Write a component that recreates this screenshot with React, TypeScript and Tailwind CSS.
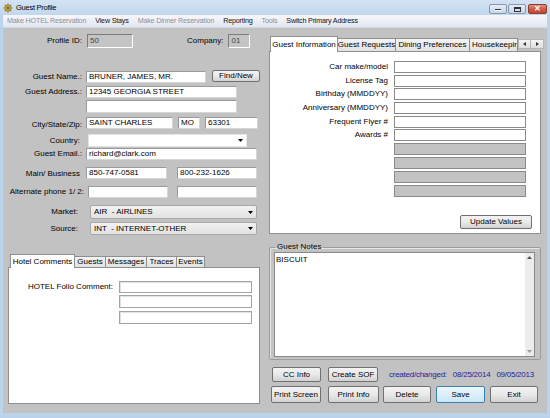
import React from "react";

const FONT = "font-['Liberation_Sans',Arial,sans-serif]";

function Field({ className = "", children }: { className?: string; children?: React.ReactNode }) {
  return (
    <div
      className={`flex items-center bg-white border border-t-[#9a9a9a] border-l-[#9a9a9a] border-r-[#d6d6d6] border-b-[#d6d6d6] px-[2px] text-[8px] whitespace-nowrap overflow-hidden shrink-0 ${className}`}
    >
      {children}
    </div>
  );
}

function Btn({
  className = "",
  children,
  primary = false,
}: {
  className?: string;
  children: React.ReactNode;
  primary?: boolean;
}) {
  return (
    <div
      className={`flex items-center justify-center shrink-0 rounded-[2px] border text-[8px] text-black whitespace-nowrap ${
        primary
          ? "border-[#3c7fb1] bg-linear-to-b from-[#eef7fd] to-[#c9e6f8]"
          : "border-[#707070] bg-linear-to-b from-[#f3f3f3] via-[#e9e9e9] to-[#d2d2d2]"
      } ${className}`}
    >
      {children}
    </div>
  );
}

function DownArrow() {
  return (
    <svg width="5" height="3" viewBox="0 0 5 3" className="shrink-0">
      <path d="M0 0h5L2.5 3z" fill="#000" />
    </svg>
  );
}

function Label({ className = "", children }: { className?: string; children: React.ReactNode }) {
  return <div className={`shrink-0 text-right text-[8px] whitespace-nowrap ${className}`}>{children}</div>;
}

function TitleBar() {
  return (
    <div className="h-[15px] flex items-start bg-linear-to-b from-[#d3e3f5] to-[#c2d6ed]">
      <svg width="10" height="10" viewBox="0 0 10 10" className="ml-[3px] mt-[3px]">
        <circle cx="5" cy="5" r="3.6" fill="#d9a81e" />
        <path d="M5 0.5v2M5 7.5v2M0.5 5h2M7.5 5h2M1.8 1.8l1.4 1.4M6.8 6.8l1.4 1.4M8.2 1.8L6.8 3.2M3.2 6.8L1.8 8.2" stroke="#6b6a3a" strokeWidth="1.1" />
        <circle cx="5" cy="5" r="1.4" fill="#5a6e8c" />
      </svg>
      <div className="ml-[3px] mt-[3px] text-[7.5px] tracking-[-0.25px] leading-[9px] text-black">Guest Profile</div>
      <div className="ml-auto mr-[3px] mt-[4px] flex gap-[1px]">
        <div className="w-[18px] h-[10px] rounded-[2px] border border-[#8798b3] bg-linear-to-b from-[#e6eef8] to-[#c6d5e9] flex items-end justify-center pb-[2px]">
          <div className="w-[6px] h-[2px] bg-[#333] border-b border-white" />
        </div>
        <div className="w-[18px] h-[10px] rounded-[2px] border border-[#8798b3] bg-linear-to-b from-[#e6eef8] to-[#c6d5e9] flex items-center justify-center">
          <div className="w-[7px] h-[5px] border border-[#333] border-t-2" />
        </div>
        <div className="ml-[1px] w-[19px] h-[10px] rounded-[2px] border border-[#8b3b2e] bg-linear-to-b from-[#e5907f] via-[#cf5a44] to-[#c04a34] flex items-center justify-center text-white text-[8px] leading-[8px] font-bold">
          ✕
        </div>
      </div>
    </div>
  );
}

function MenuBar() {
  const items = [
    { t: "Make HOTEL Reservation", on: false },
    { t: "View Stays", on: true },
    { t: "Make Dinner Reservation", on: false },
    { t: "Reporting", on: true },
    { t: "Tools", on: false },
    { t: "Switch Primary Address", on: true },
  ];
  return (
    <div className="h-[13px] flex items-center gap-[9px] pl-[4px] bg-linear-to-b from-[#f6f7fb] to-[#e3e7f1] border-b border-[#cdd8ea]">
      {items.map((i) => (
        <span
          key={i.t}
          className={`text-[7.2px] tracking-[-0.2px] whitespace-nowrap ${i.on ? "text-[#111]" : "text-[#8e8f99]"}`}
        >
          {i.t}
        </span>
      ))}
    </div>
  );
}

function LeftColumn() {
  const tabs = [
    { t: "Guests", w: "w-[31px]" },
    { t: "Messages", w: "w-[41px]" },
    { t: "Traces", w: "w-[30px]" },
    { t: "Events", w: "w-[28px]" },
  ];
  return (
    <div className="w-[266px] shrink-0 flex flex-col">
      {/* Profile / Company */}
      <div className="mt-[6px] h-[14px] flex items-center">
        <Label className="w-[79px]">Profile ID:</Label>
        <div className="ml-[5px] w-[46px] h-[14px] flex items-center px-[2px] text-[8px] text-[#444] border border-t-[#7c7c7c] border-l-[#7c7c7c] border-r-white border-b-white bg-[#c4c4c4]">
          50
        </div>
        <Label className="ml-[54px]">Company:</Label>
        <div className="ml-[5px] w-[22px] h-[14px] flex items-center px-[2px] text-[8px] text-[#444] border border-t-[#7c7c7c] border-l-[#7c7c7c] border-r-white border-b-white bg-[#c4c4c4]">
          01
        </div>
      </div>

      {/* Guest Name */}
      <div className="mt-[22px] h-[13px] flex items-start">
        <Label className="w-[79px] self-center">Guest Name.:</Label>
        <Field className="ml-[4px] mt-[1px] w-[120px] h-[12px]">BRUNER, JAMES, MR.</Field>
        <Btn className="ml-[6px] w-[48px] h-[12px]">Find/New</Btn>
      </div>

      <div className="mt-[3px] h-[12px] flex items-center">
        <Label className="w-[79px]">Guest Address.:</Label>
        <Field className="ml-[4px] w-[151px] h-[12px]">12345 GEORGIA STREET</Field>
      </div>
      <div className="mt-[2px] h-[13px] flex items-center">
        <div className="w-[79px] shrink-0" />
        <Field className="ml-[4px] w-[151px] h-[13px]" />
      </div>

      <div className="mt-[4px] h-[12px] flex items-center">
        <Label className="w-[79px] mt-[3px]">City/State/Zip:</Label>
        <Field className="ml-[4px] w-[87px] h-[12px]">SAINT CHARLES</Field>
        <Field className="ml-[5px] w-[22px] h-[12px]">MO</Field>
        <Field className="ml-[5px] w-[53px] h-[12px]">63301</Field>
      </div>

      <div className="mt-[5px] h-[13px] flex items-center">
        <Label className="w-[77px]">Country:</Label>
        <div className="ml-[8px] w-[159px] h-[13px] bg-white border border-[#e4e4e4] flex items-center justify-end pr-[3px]">
          <DownArrow />
        </div>
      </div>

      <div className="mt-[1px] h-[12px] flex items-center">
        <Label className="w-[79px]">Guest Email.:</Label>
        <Field className="ml-[4px] w-[171px] h-[12px]">richard@clark.com</Field>
      </div>

      <div className="mt-[7px] h-[12px] flex items-center">
        <Label className="w-[77px] mt-[2px]">Main/ Business</Label>
        <Field className="ml-[6px] w-[81px] h-[12px]">850-747-0581</Field>
        <Field className="ml-[10px] w-[80px] h-[12px]">800-232-1626</Field>
      </div>

      <div className="mt-[7px] h-[12px] flex items-center">
        <Label className="w-[81px]">Alternate phone 1/ 2:</Label>
        <Field className="ml-[4px] w-[80px] h-[12px]" />
        <Field className="ml-[9px] w-[80px] h-[12px]" />
      </div>

      <div className="mt-[7px] h-[14px] flex items-center">
        <Label className="w-[75px]">Market:</Label>
        <div className="ml-[12px] w-[167px] h-[14px] rounded-[2px] border border-[#a8a8a8] bg-linear-to-b from-[#f2f2f2] to-[#e2e2e2] flex items-center px-[3px] text-[8px]">
          <span className="whitespace-pre">AIR  - AIRLINES</span>
          <span className="ml-auto">
            <DownArrow />
          </span>
        </div>
      </div>
      <div className="mt-[3px] h-[13px] flex items-center">
        <Label className="w-[75px]">Source:</Label>
        <div className="ml-[12px] w-[167px] h-[13px] rounded-[2px] border border-[#a8a8a8] bg-linear-to-b from-[#f2f2f2] to-[#e2e2e2] flex items-center px-[3px] text-[8px]">
          <span className="whitespace-pre">INT  - INTERNET-OTHER</span>
          <span className="ml-auto">
            <DownArrow />
          </span>
        </div>
      </div>

      {/* Hotel comments tabs */}
      <div className="mt-[19px] ml-[5px] w-[252px] flex flex-col">
        <div className="h-[13px] flex items-end pl-[2px]">
          <div className="relative z-10 -mb-px w-[65px] h-[14px] bg-white border border-b-0 border-[#8e8f8f] flex items-center justify-center text-[8px] whitespace-nowrap">
            Hotel Comments
          </div>
          {tabs.map((t) => (
            <div
              key={t.t}
              className={`${t.w} h-[11px] shrink-0 border border-b-0 border-l-0 border-[#8e8f8f] bg-linear-to-b from-[#f4f4f4] to-[#e1e1e1] flex items-center justify-center text-[8px] whitespace-nowrap`}
            >
              {t.t}
            </div>
          ))}
        </div>
        <div className="h-[137px] bg-white border border-[#8e8f8f] flex flex-col">
          <div className="mt-[13px] flex items-center">
            <Label className="w-[104px]">HOTEL Folio Comment:</Label>
            <div className="ml-[6px] w-[133px] h-[12px] border border-[#a3a3a3] shadow-[inset_1px_1px_0_#e2e2e2]" />
          </div>
          <div className="mt-[2px] ml-[110px] w-[133px] h-[13px] border border-[#a3a3a3] shadow-[inset_1px_1px_0_#e2e2e2]" />
          <div className="mt-[3px] ml-[110px] w-[133px] h-[13px] border border-[#a3a3a3] shadow-[inset_1px_1px_0_#e2e2e2]" />
        </div>
      </div>
    </div>
  );
}

function RightColumn() {
  const rows = [
    { l: "Car make/model", mt: "mt-[9px]" },
    { l: "License Tag", mt: "mt-[2px]" },
    { l: "Birthday (MMDDYY)", mt: "mt-[1px]" },
    { l: "Anniversary (MMDDYY)", mt: "mt-[2px]" },
    { l: "Frequent Flyer #", mt: "mt-[2px]" },
    { l: "Awards #", mt: "mt-[1px]" },
  ];
  const grays = ["mt-[2px]", "mt-[2px]", "mt-[2px]", "mt-[2px]"];
  return (
    <div className="w-[278px] shrink-0 flex flex-col">
      {/* tabs */}
      <div className="mt-[8px] h-[15px] flex items-end pl-[1px]">
        <div className="relative z-10 -mb-px w-[68px] h-[16px] bg-white border border-b-0 border-[#8e8f8f] flex items-center justify-center text-[8px] whitespace-nowrap">
          Guest Information
        </div>
        <div className="w-[58px] h-[13px] shrink-0 border border-b-0 border-l-0 border-[#8e8f8f] bg-linear-to-b from-[#f4f4f4] to-[#e1e1e1] flex items-center justify-center text-[8px] whitespace-nowrap">
          Guest Requests
        </div>
        <div className="w-[74px] h-[13px] shrink-0 border border-b-0 border-l-0 border-[#8e8f8f] bg-linear-to-b from-[#f4f4f4] to-[#e1e1e1] flex items-center justify-center text-[8px] whitespace-nowrap">
          Dining Preferences
        </div>
        <div className="w-[48px] h-[13px] shrink-0 border border-b-0 border-l-0 border-[#8e8f8f] bg-linear-to-b from-[#f4f4f4] to-[#e1e1e1] flex items-center pl-[2px] text-[8px] whitespace-nowrap overflow-hidden">
          Housekeepir
        </div>
        <div className="self-start mt-[3px] flex">
          <div className="w-[13px] h-[10px] border border-[#b5b5b5] bg-linear-to-b from-[#f4f4f4] to-[#dedede] flex items-center justify-center">
            <svg width="3" height="4" viewBox="0 0 3 4">
              <path d="M3 0v4L0 2z" fill="#333" />
            </svg>
          </div>
          <div className="w-[13px] h-[10px] border border-l-0 border-[#b5b5b5] bg-linear-to-b from-[#f4f4f4] to-[#dedede] flex items-center justify-center">
            <svg width="3" height="4" viewBox="0 0 3 4">
              <path d="M0 0v4L3 2z" fill="#333" />
            </svg>
          </div>
        </div>
      </div>
      <div className="w-[272px] h-[183px] bg-white border border-[#8e8f8f] flex flex-col">
        {rows.map((r) => (
          <div key={r.l} className={`${r.mt} h-[12px] flex items-center`}>
            <Label className="w-[118px]">{r.l}</Label>
            <div className="ml-[6px] w-[132px] h-[12px] border border-[#8a8a8a] bg-white" />
          </div>
        ))}
        {grays.map((g, i) => (
          <div key={i} className={`${g} ml-[124px] w-[132px] h-[12px] border border-[#8a8a8a] bg-[#c3c3c3]`} />
        ))}
        <Btn className="mt-[18px] self-end mr-[8px] w-[72px] h-[14px]">Update Values</Btn>
      </div>

      {/* Guest notes */}
      <fieldset className="mt-[8px] w-[272px] border border-[#9c9c9c] shadow-[inset_1px_1px_0_#e6e6e6] rounded-[2px] pl-[4px] pb-[2px]">
        <legend className="ml-[1px] px-[2px] text-[8px] leading-[10px]">Guest Notes</legend>
        <div className="w-[261px] h-[105px] bg-white border border-[#8a8a8a] flex">
          <div className="flex-1 px-[1px] pt-[2px] text-[8px] leading-[9px]">BISCUIT</div>
          <div className="w-[9px] bg-[#ececec] flex flex-col items-center justify-between py-[3px]">
            <svg width="5" height="3" viewBox="0 0 5 3">
              <path d="M0 3h5L2.5 0z" fill="#555" />
            </svg>
            <svg width="5" height="3" viewBox="0 0 5 3">
              <path d="M0 0h5L2.5 3z" fill="#999" />
            </svg>
          </div>
        </div>
      </fieldset>

      {/* action buttons */}
      <div className="mt-[7px] h-[15px] flex items-center pl-[3px]">
        <Btn className="w-[49px] h-[15px]">CC Info</Btn>
        <Btn className="ml-[7px] w-[50px] h-[15px]">Create SOF</Btn>
        <div className="ml-[11px] flex text-[8px] tracking-[-0.25px] text-[#24249a] whitespace-nowrap">
          <span>created/changed:</span>
          <span className="ml-[6px]">08/25/2014</span>
          <span className="ml-[6px]">09/05/2013</span>
        </div>
      </div>
      <div className="mt-[4px] h-[17px] flex items-center pl-[2px]">
        <Btn className="w-[50px] h-[17px]">Print Screen</Btn>
        <Btn className="ml-[7px] w-[51px] h-[17px]">Print Info</Btn>
        <Btn className="ml-[4px] w-[48px] h-[17px]">Delete</Btn>
        <Btn primary className="ml-[5px] w-[49px] h-[17px]">Save</Btn>
        <Btn className="ml-[5px] w-[48px] h-[17px]">Exit</Btn>
      </div>
    </div>
  );
}

export default function App() {
  return (
    <div className={`${FONT} w-[550px] h-[418px] overflow-hidden bg-[#bcd3ec] flex flex-col text-black`}>
      <TitleBar />
      <div className="mx-[3px] mb-[5px] flex-1 flex flex-col bg-[#c2c2c2]">
        <MenuBar />
        <div className="flex-1 flex">
          <LeftColumn />
          <RightColumn />
        </div>
      </div>
    </div>
  );
}
